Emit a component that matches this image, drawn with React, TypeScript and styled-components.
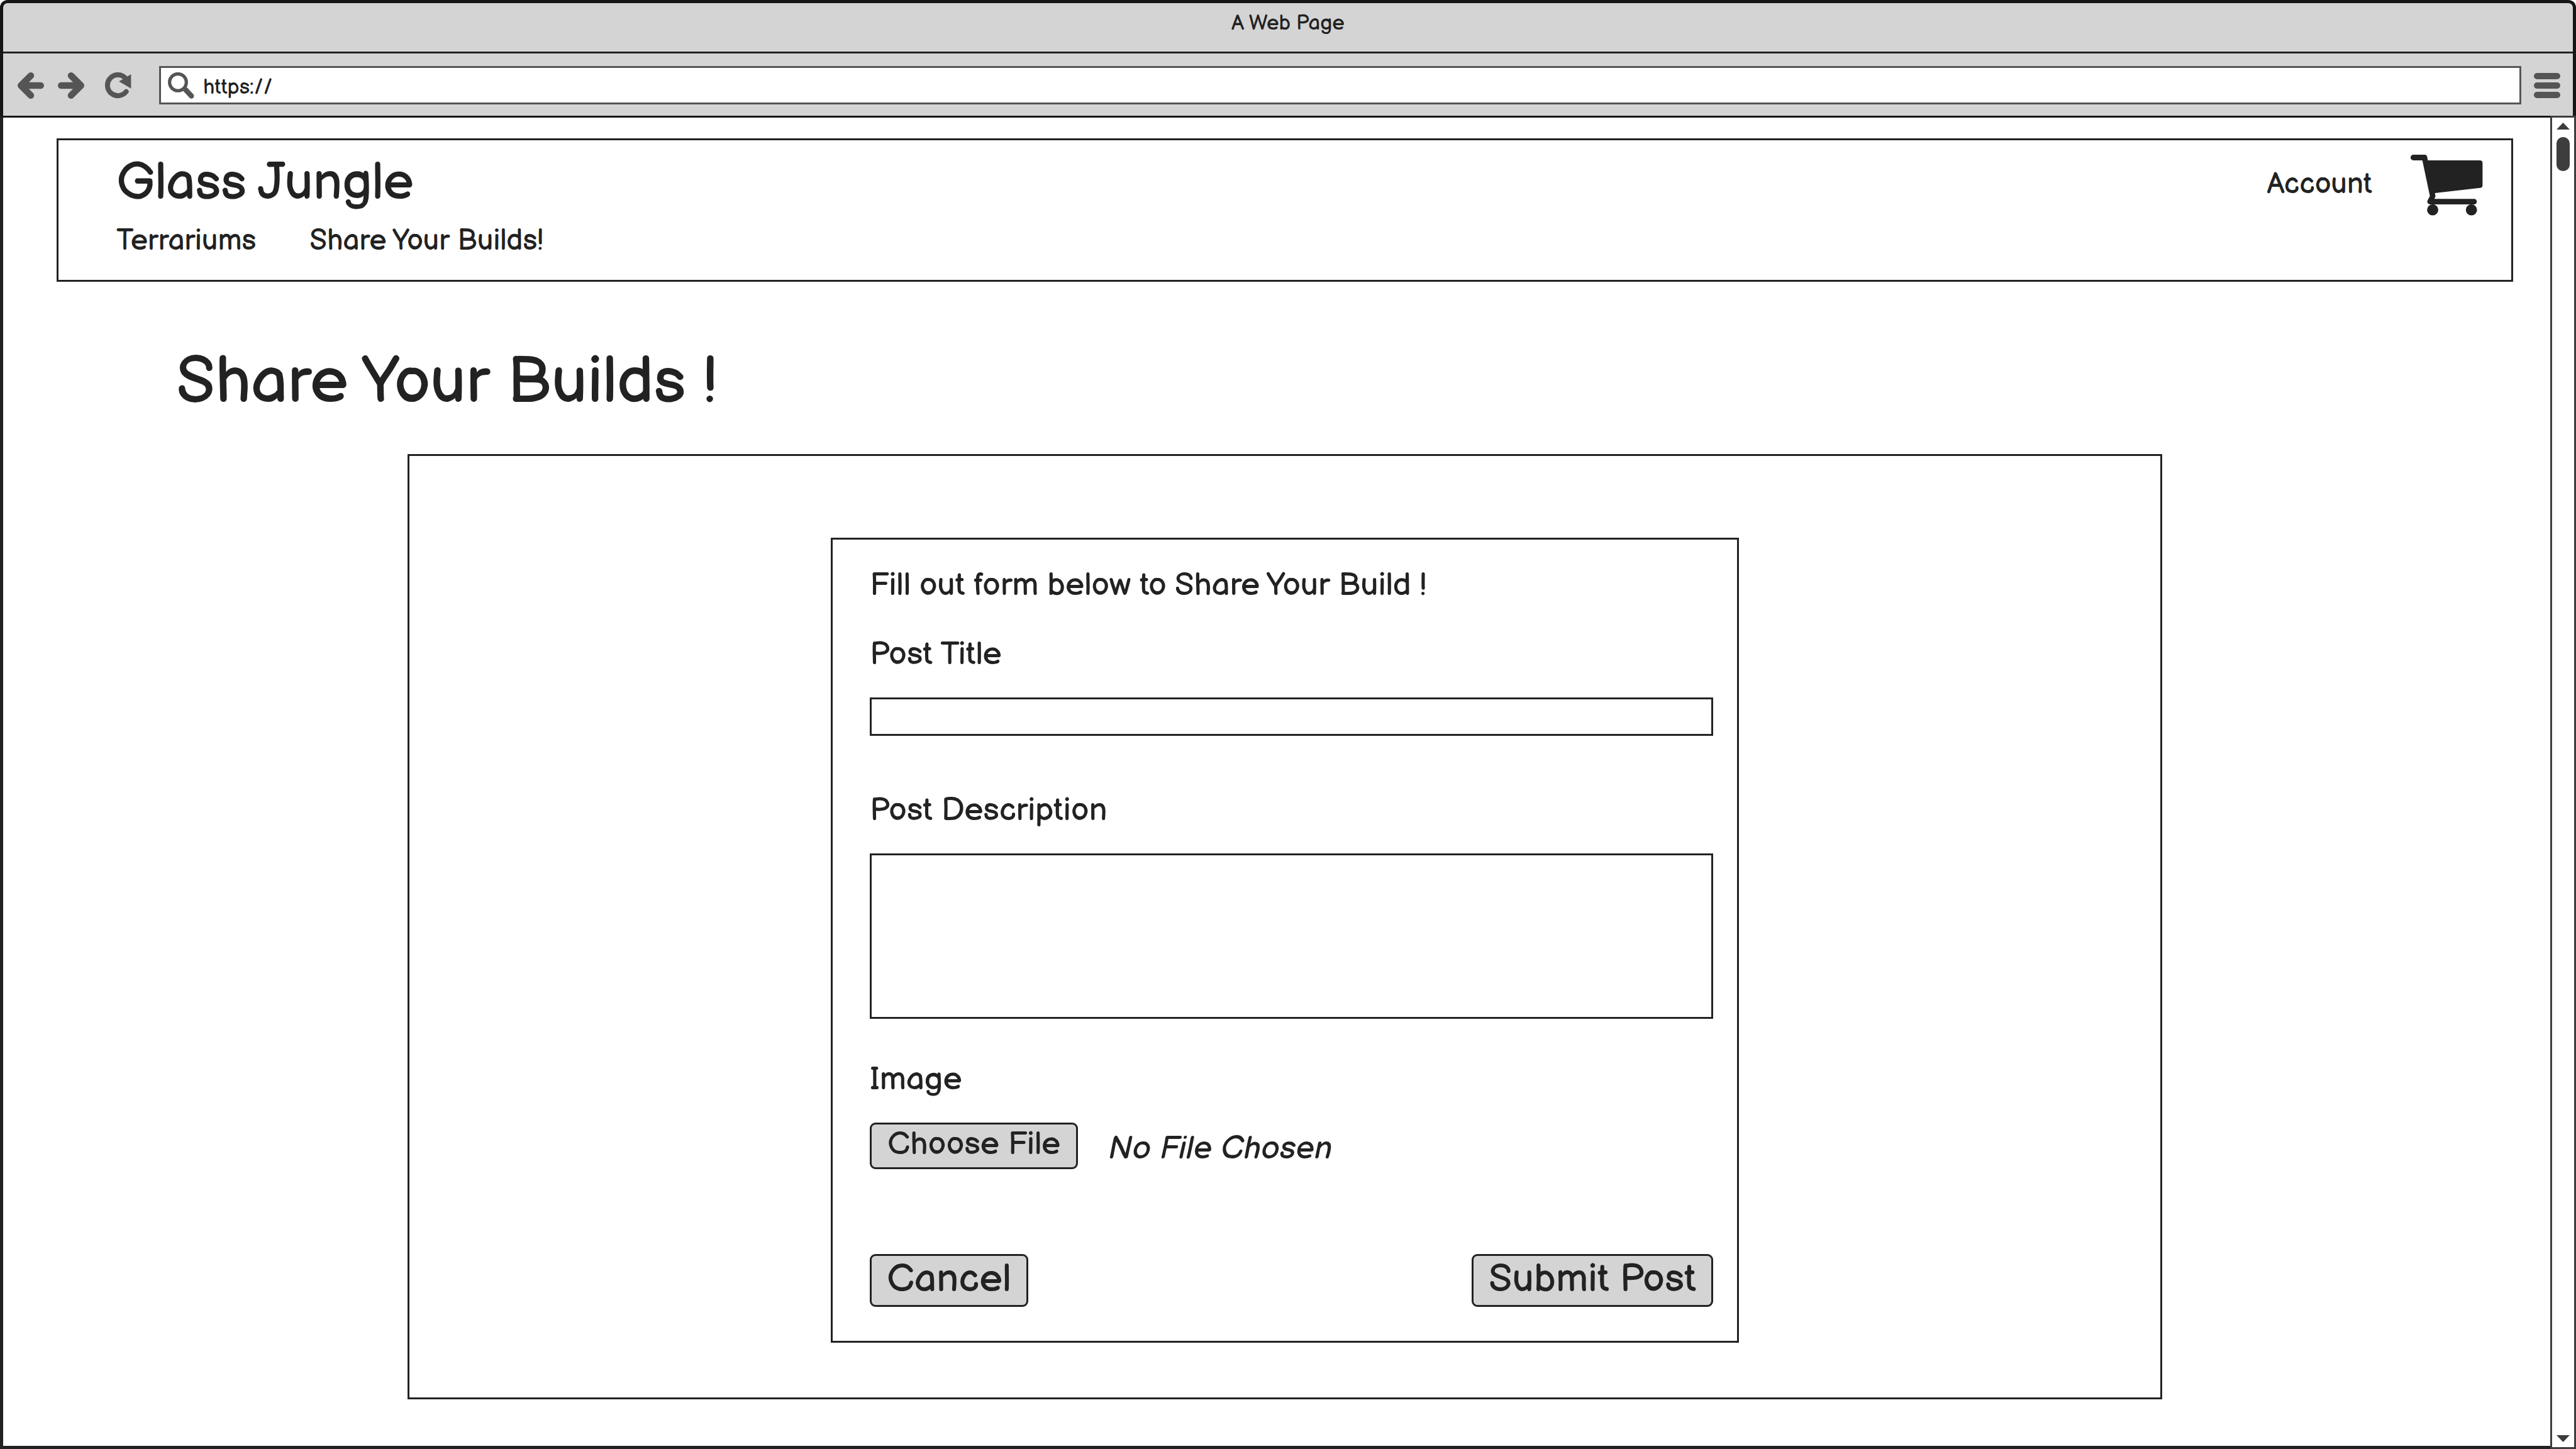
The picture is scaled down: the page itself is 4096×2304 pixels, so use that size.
import React, { useRef, useState } from 'react';
import styled, { createGlobalStyle } from 'styled-components';

const ink = '#222222';
const frame = '#161616';
const chrome = '#d4d4d4';
const chromeIcon = '#555555';
const scroll = '#3d3d3d';

const GlobalStyle = createGlobalStyle`
  *, *::before, *::after { box-sizing: border-box; }
  body {
    margin: 0;
    background: #ffffff;
    color: ${ink};
    font-family: "Balsamiq Sans", "Liberation Sans", sans-serif;
    font-size: 51px;
    line-height: 64px;
  }
  button, input, textarea { font: inherit; color: inherit; }
`;

const BrowserWindow = styled.div`
  display: flex;
  flex-direction: column;
  min-height: 100vh;
`;

const Chrome = styled.header`
  border: 5px solid ${frame};
  border-bottom: 0;
  border-radius: 12px 12px 0 0;
  background: ${chrome};
`;

const TitleBar = styled.div`
  height: 80px;
  padding-top: 12px;
  border-bottom: 3px solid ${ink};
  font-size: 33px;
  line-height: 40px;
  text-align: center;
`;

const Toolbar = styled.div`
  display: flex;
  align-items: center;
  height: 99px;
  padding: 2px 20px 0 23px;
`;

const IconButton = styled.button`
  display: flex;
  padding: 0;
  border: 0;
  background: none;
  color: ${chromeIcon};
`;

const HistoryButtons = styled.div`
  display: flex;
  gap: 22px;
  margin-right: 33px;
`;

const AddressBar = styled.label`
  display: flex;
  flex: 1;
  align-items: center;
  gap: 14px;
  height: 61px;
  margin: 0 20px 0 44px;
  padding: 0 11px;
  border: 3px solid ${chromeIcon};
  background: #ffffff;
  color: ${chromeIcon};
`;

const AddressInput = styled.input`
  flex: 1;
  min-width: 0;
  padding: 6px 0 0;
  border: 0;
  outline: 0;
  background: none;
  color: ${ink};
  font-size: 33px;
  line-height: 40px;
`;

const MenuButton = styled(IconButton)`
  flex-direction: column;
  gap: 5px;
`;

const MenuBar = styled.span`
  width: 42px;
  height: 10px;
  border-radius: 5px;
  background: ${chromeIcon};
`;

const WindowBody = styled.div`
  display: flex;
  flex: 1;
`;

const Viewport = styled.div`
  flex: 1;
  padding: 33px 59px 70px 85px;
  border: 5px solid ${ink};
  border-top: 3px solid ${frame};
  border-right: 0;
`;

const ScrollTrack = styled.div`
  display: flex;
  flex-direction: column;
  align-items: center;
  width: 41px;
  padding: 8px 0;
  border: 3px solid ${scroll};
  color: ${scroll};
`;

const ScrollThumb = styled.div`
  width: 21px;
  height: 54px;
  margin: 12px 0 auto;
  border-radius: 10px;
  background: ${scroll};
`;

const SiteHeader = styled.header`
  display: flex;
  justify-content: space-between;
  align-items: flex-start;
  padding: 20px 45px 33px 92px;
  border: 3px solid ${ink};
`;

const Brand = styled.a`
  display: block;
  margin-bottom: 15px;
  color: inherit;
  font-size: 82px;
  line-height: 98px;
  text-decoration: none;
`;

const SiteNav = styled.nav`
  display: flex;
  gap: 85px;
`;

const NavLink = styled.a`
  color: inherit;
  font-size: 46px;
  line-height: 56px;
  text-decoration: none;
`;

const AccountArea = styled.div`
  display: flex;
  align-items: flex-start;
  gap: 61px;
  padding-top: 3px;
`;

const AccountLink = styled(NavLink)`
  padding-top: 20px;
`;

const CartLink = styled.a`
  display: flex;
  color: inherit;
`;

const PageTitle = styled.h1`
  margin: 98px 0 52px;
  padding-left: 190px;
  font-size: 103px;
  font-weight: 400;
  line-height: 124px;
`;

const Panel = styled.section`
  max-width: 2790px;
  margin: 0 auto;
  padding: 130px 40px 87px;
  border: 3px solid ${ink};
`;

const ShareForm = styled.form`
  max-width: 1444px;
  margin: 0 auto;
  padding: 41px 38px 54px 59px;
  border: 3px solid ${ink};
`;

const Intro = styled.p`
  margin: 0 0 46px;
`;

const Field = styled.div<{ $after: number }>`
  display: flex;
  flex-direction: column;
  align-items: stretch;
  gap: 36px;
  margin-bottom: ${p => p.$after}px;
`;

const TextInput = styled.input`
  height: 61px;
  padding: 0 12px;
  border: 3px solid ${ink};
  border-radius: 0;
  background: #ffffff;
`;

const TextArea = styled.textarea`
  display: block;
  height: 263px;
  padding: 8px 12px;
  border: 3px solid ${ink};
  border-radius: 0;
  background: #ffffff;
  resize: none;
`;

const FileRow = styled.div`
  display: flex;
  align-items: flex-end;
  gap: 48px;
`;

const FileStatus = styled.output`
  font-style: italic;
`;

const Button = styled.button<{ $large?: boolean }>`
  padding: ${p => (p.$large ? '0 24px 2px' : '0 25px 4px')};
  border: 3px solid ${ink};
  border-radius: 9px;
  background: ${chrome};
  font-size: ${p => (p.$large ? 62 : 51)}px;
  line-height: ${p => (p.$large ? 76 : 64)}px;
`;

const Actions = styled.div`
  display: flex;
  justify-content: space-between;
`;

function ArrowIcon({ forward = false }: { forward?: boolean }) {
  return (
    <svg width="42" height="42" viewBox="0 0 41.6 41.6" fill="none" stroke="currentColor" strokeWidth="10.4" strokeLinecap="round" strokeLinejoin="round" aria-hidden="true">
      <path d={forward ? 'M20.8 5.2L36.4 20.8L20.8 36.4M36.4 20.8H5.2' : 'M20.8 5.2L5.2 20.8L20.8 36.4M5.2 20.8H36.4'} />
    </svg>
  );
}

function ReloadIcon() {
  return (
    <svg width="42" height="42" viewBox="0 0 41.6 41.6" aria-hidden="true">
      <path d="M31.5 8.5A16.4 16.4 0 1 0 33.3 30.4" fill="none" stroke="currentColor" strokeWidth="7.9" strokeLinecap="round" />
      <path d="M41 3V25.4L21.9 14.3Z" fill="currentColor" />
    </svg>
  );
}

function SearchIcon() {
  return (
    <svg width="42" height="42" viewBox="0 0 41.6 41.6" fill="none" stroke="currentColor" strokeLinecap="round" aria-hidden="true">
      <circle cx="15.8" cy="15.7" r="13.2" strokeWidth="5.2" />
      <path d="M27.4 27L37 37.3" strokeWidth="8.2" />
    </svg>
  );
}

function CartIcon() {
  return (
    <svg width="115" height="97" viewBox="0 0 115 97" fill="currentColor" aria-hidden="true">
      <path d="M4.4 0H22.5C25.6 0 26.6 2.2 27.3 8.9H109.8Q114.4 8.9 114.4 13.3V48.4Q114.4 52.3 110.6 52.7L38.7 61L39.6 66.2L37.8 70.3H101A4.3 4.3 0 0 1 101 78.9H31C27 78.9 25.6 75.5 27.2 72.2L30.7 65.8L18.7 8.9H4.4A4.4 4.4 0 0 1 4.4 0Z" />
      <circle cx="35.1" cy="87.7" r="8.9" />
      <circle cx="96.7" cy="87.7" r="8.9" />
    </svg>
  );
}

function ScrollArrow({ down = false }: { down?: boolean }) {
  return (
    <svg width="21" height="11" viewBox="0 0 21 11" fill="currentColor" aria-hidden="true">
      <path d={down ? 'M0 0H21L10.5 11Z' : 'M0 11H21L10.5 0Z'} />
    </svg>
  );
}

export default function App() {
  const fileInput = useRef<HTMLInputElement>(null);
  const [fileName, setFileName] = useState('No File Chosen');

  return (
    <BrowserWindow>
      <GlobalStyle />
      <Chrome>
        <TitleBar>A Web Page</TitleBar>
        <Toolbar>
          <HistoryButtons>
            <IconButton type="button" aria-label="Back"><ArrowIcon /></IconButton>
            <IconButton type="button" aria-label="Forward"><ArrowIcon forward /></IconButton>
          </HistoryButtons>
          <IconButton type="button" aria-label="Reload"><ReloadIcon /></IconButton>
          <AddressBar>
            <SearchIcon />
            <AddressInput type="text" aria-label="Address" defaultValue="https://" />
          </AddressBar>
          <MenuButton type="button" aria-label="Menu"><MenuBar /><MenuBar /><MenuBar /></MenuButton>
        </Toolbar>
      </Chrome>
      <WindowBody>
        <Viewport>
          <SiteHeader>
            <div>
              <Brand href="#">Glass Jungle</Brand>
              <SiteNav>
                <NavLink href="#terrariums">Terrariums</NavLink>
                <NavLink href="#share">Share Your Builds!</NavLink>
              </SiteNav>
            </div>
            <AccountArea>
              <AccountLink href="#account">Account</AccountLink>
              <CartLink href="#cart" aria-label="Cart"><CartIcon /></CartLink>
            </AccountArea>
          </SiteHeader>
          <main>
            <PageTitle>Share Your Builds !</PageTitle>
            <Panel>
              <ShareForm onSubmit={e => e.preventDefault()}>
                <Intro>Fill out form below to Share Your Build !</Intro>
                <Field $after={87}>
                  <label htmlFor="post-title">Post Title</label>
                  <TextInput id="post-title" type="text" />
                </Field>
                <Field $after={65}>
                  <label htmlFor="post-description">Post Description</label>
                  <TextArea id="post-description" />
                </Field>
                <Field $after={135}>
                  <label htmlFor="post-image">Image</label>
                  <FileRow>
                    <input
                      ref={fileInput}
                      id="post-image"
                      type="file"
                      accept="image/*"
                      hidden
                      onChange={e => setFileName(e.target.files?.[0]?.name ?? 'No File Chosen')}
                    />
                    <Button type="button" onClick={() => fileInput.current?.click()}>Choose File</Button>
                    <FileStatus htmlFor="post-image">{fileName}</FileStatus>
                  </FileRow>
                </Field>
                <Actions>
                  <Button $large type="reset">Cancel</Button>
                  <Button $large type="submit">Submit Post</Button>
                </Actions>
              </ShareForm>
            </Panel>
          </main>
        </Viewport>
        <ScrollTrack>
          <ScrollArrow />
          <ScrollThumb />
          <ScrollArrow down />
        </ScrollTrack>
      </WindowBody>
    </BrowserWindow>
  );
}
